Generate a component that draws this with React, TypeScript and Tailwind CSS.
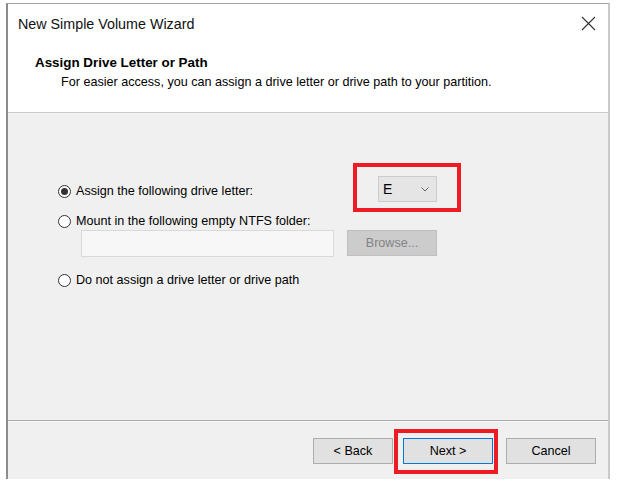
import React from 'react';

const font = { fontFamily: '"Liberation Sans", Arial, sans-serif' };

function Radio({ checked }: { checked?: boolean }) {
  return (
    <span className="flex h-[13px] w-[13px] shrink-0 items-center justify-center rounded-full border border-[#333333] bg-white">
      {checked && <span className="h-[7px] w-[7px] rounded-full bg-[#333333]" />}
    </span>
  );
}

export default function App() {
  return (
    <div className="min-h-[487px] bg-white pl-[6px] pt-[3px] text-[#000000]" style={font}>
      <div className="flex h-[476px] w-[604px] flex-col border-l-2 border-r-2 border-t border-l-[#8c8c8c] border-r-[#c9c9c9] border-t-[#a5a5a5]">
        {/* header */}
        <div className="h-[108px] bg-white">
          <div className="flex items-start justify-between pl-[10px] pr-[12px] pt-[11px]">
            <span className="text-[14.3px] leading-[18px] text-[#111]">New Simple Volume Wizard</span>
            <svg width="15" height="15" viewBox="0 0 15 15" className="mt-[1px]">
              <path d="M1 1 L14 14 M14 1 L1 14" stroke="#333" strokeWidth="1.1" />
            </svg>
          </div>
          <div className="mt-[22px] pl-[27px] text-[13.4px] font-bold leading-[16px]">Assign Drive Letter or Path</div>
          <div className="mt-[3px] pl-[53px] text-[12.6px] leading-[16px]">
            For easier access, you can assign a drive letter or drive path to your partition.
          </div>
        </div>
        <div className="h-[1px] bg-[#c7c7c7]" />
        <div className="h-[1px] bg-[#f7f7f7]" />

        {/* body */}
        <div className="h-[306px] bg-[#f0f0f0] pl-[50px] pt-[49px] text-[12.6px] leading-[16px]">
          <div className="flex items-start">
            <label className="mt-[20px] flex w-[295px] items-center gap-[5px]">
              <Radio checked />
              <span>Assign the following drive letter:</span>
            </label>
            <div className="h-[49px] w-[108px] border-4 border-[#ed1c24] pl-[21px] pt-[9px]">
              <div className="flex h-[26px] w-[59px] items-center justify-between border border-[#cccccc] bg-[#e5e5e5] pl-[4px] pr-[7px]">
                <span className="text-[14px]">E</span>
                <svg width="8" height="5" viewBox="0 0 8 5">
                  <path d="M0.5 0.5 L4 4 L7.5 0.5" fill="none" stroke="#666" strokeWidth="1" />
                </svg>
              </div>
            </div>
          </div>
          <label className="mt-[1px] flex items-center gap-[5px]">
            <Radio />
            <span>Mount in the following empty NTFS folder:</span>
          </label>
          <div className="mt-[1px] flex items-start pl-[23px]">
            <div className="h-[27px] w-[253px] border border-[#d9d9d9] bg-[#f7f7f7]" />
            <div className="ml-[13px] flex h-[26px] w-[90px] items-center justify-center border border-[#bfbfbf] bg-[#cccccc] text-[#838383]">
              Browse...
            </div>
          </div>
          <label className="mt-[15px] flex items-center gap-[5px]">
            <Radio />
            <span>Do not assign a drive letter or drive path</span>
          </label>
        </div>

        {/* footer */}
        <div className="h-[1px] bg-[#a9a9a9]" />
        <div className="h-[1px] bg-[#fafafa]" />
        <div className="flex flex-1 items-start justify-end bg-[#f0f0f0] pr-[12px] pt-[7px] text-[12.6px]">
          <div className="mt-[9px] flex h-[26px] w-[80px] items-center justify-center border border-[#adadad] bg-[#e1e1e1]">
            &lt; Back
          </div>
          <div className="ml-[1px] h-[45px] w-[104px] border-4 border-[#ed1c24] pl-[5px] pt-[5px]">
            <div className="flex h-[26px] w-[90px] items-center justify-center border border-[#0078d7] bg-[#e1e1e1]">
              Next &gt;
            </div>
          </div>
          <div className="ml-[8px] mt-[9px] flex h-[26px] w-[90px] items-center justify-center border border-[#adadad] bg-[#e1e1e1]">
            Cancel
          </div>
        </div>
      </div>
    </div>
  );
}
